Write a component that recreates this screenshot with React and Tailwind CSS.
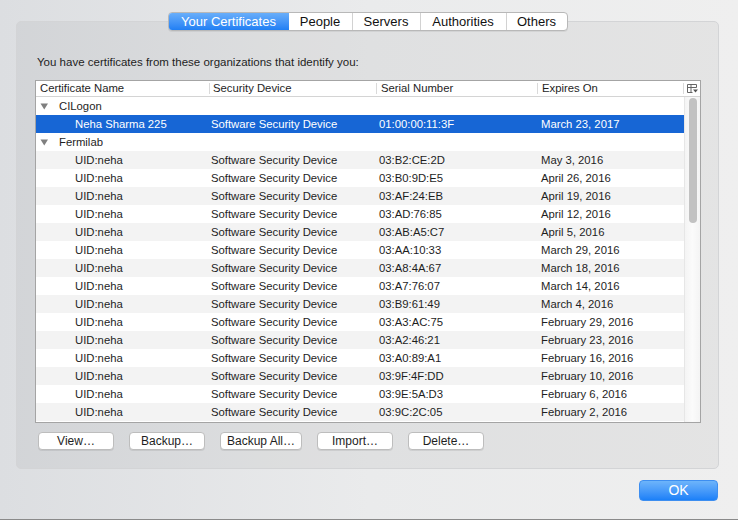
import React from "react";

const rows = [
  ["May 3, 2016", "03:B2:CE:2D"],
  ["April 26, 2016", "03:B0:9D:E5"],
  ["April 19, 2016", "03:AF:24:EB"],
  ["April 12, 2016", "03:AD:76:85"],
  ["April 5, 2016", "03:AB:A5:C7"],
  ["March 29, 2016", "03:AA:10:33"],
  ["March 18, 2016", "03:A8:4A:67"],
  ["March 14, 2016", "03:A7:76:07"],
  ["March 4, 2016", "03:B9:61:49"],
  ["February 29, 2016", "03:A3:AC:75"],
  ["February 23, 2016", "03:A2:46:21"],
  ["February 16, 2016", "03:A0:89:A1"],
  ["February 10, 2016", "03:9F:4F:DD"],
  ["February 6, 2016", "03:9E:5A:D3"],
  ["February 2, 2016", "03:9C:2C:05"],
];

const tabs = [
  ["Your Certificates", "w-[120px]"],
  ["People", "w-[63px]"],
  ["Servers", "w-[68px]"],
  ["Authorities", "w-[86px]"],
  ["Others", "w-[61px]"],
];

function Tri() {
  return (
    <svg width="9" height="7" viewBox="0 0 9 7" className="shrink-0">
      <path d="M0.5 0.5 L8 0.5 L4.25 6.5 Z" fill="#7f7f7f" />
    </svg>
  );
}

function Row({ idx, selected, group, name, device, serial, exp }) {
  const bg = selected ? "bg-[#1766d5] text-white" : idx % 2 === 1 ? "bg-[#f3f3f3] text-[#1e1e1e]" : "bg-white text-[#1e1e1e]";
  if (group) {
    return (
      <div className={`h-[18px] flex items-center ${bg}`}>
        <div className="w-[174px] flex items-center pl-[4px] gap-[10px]">
          <Tri />
          <span>{name}</span>
        </div>
      </div>
    );
  }
  return (
    <div className={`h-[18px] flex items-center ${bg}`}>
      <div className="w-[174px] pl-[39px] whitespace-nowrap">{name}</div>
      <div className="w-[167px] pl-[1px] whitespace-nowrap">{device}</div>
      <div className="w-[161px] pl-[2px] whitespace-nowrap">{serial}</div>
      <div className="w-[145px] pl-[3px] whitespace-nowrap">{exp}</div>
    </div>
  );
}

function Btn({ label, w }) {
  return (
    <div className={`${w} h-[18px] rounded-[4px] bg-white border border-[#bdbdbd] shadow-[0_1px_0_rgba(0,0,0,0.08)] flex items-center justify-center text-[12px] text-[#1e1e1e]`}>
      {label}
    </div>
  );
}

export default function App() {
  return (
    <div className="w-[738px] h-[520px] flex flex-col bg-gradient-to-r from-[#dcdee1] via-[#eaebec] to-[#efefef] font-['Liberation_Sans',Arial,sans-serif] overflow-hidden">
      <div className="ml-[16px] mt-[21px] w-[703px] h-[448px] rounded-[5px] border border-[#d3d4d6] bg-black/[0.045] flex flex-col">
        {/* tabs */}
        <div className="-mt-[10px] flex justify-center">
          <div className="flex h-[19px] rounded-[4px] border border-[#b8b8b8] bg-white shadow-[0_1px_0_rgba(0,0,0,0.06)] overflow-hidden text-[13px]">
            {tabs.map(([t, w], i) => (
              <div
                key={t}
                className={`${w} flex items-center justify-center ${
                  i === 0
                    ? "bg-gradient-to-b from-[#68aefa] to-[#1f7ff4] text-white"
                    : "text-[#111] border-l border-[#d2d2d2]"
                } ${i === 1 ? "border-l-0" : ""}`}
              >
                {t}
              </div>
            ))}
          </div>
        </div>
        <div className="mt-[24px] ml-[20px] h-[14px] text-[11.5px] leading-[14px] text-[#1e1e1e]">
          You have certificates from these organizations that identify you:
        </div>
        {/* table */}
        <div className="mt-[11px] ml-[18px] w-[666px] h-[343px] border border-[#a4a4a4] bg-white flex flex-col text-[11.3px]">
          <div className="h-[16px] flex items-center border-b border-[#d4d4d4] text-[#1e1e1e] bg-white">
            <div className="w-[174px] pl-[4px] border-r border-[#dadada] h-[11px] flex items-center">Certificate Name</div>
            <div className="w-[167px] pl-[3px] border-r border-[#dadada] h-[11px] flex items-center">Security Device</div>
            <div className="w-[161px] pl-[4px] border-r border-[#dadada] h-[11px] flex items-center">Serial Number</div>
            <div className="w-[146px] pl-[4px] border-r border-[#dadada] h-[11px] flex items-center">Expires On</div>
            <div className="flex-1 flex items-center justify-center">
              <svg width="11" height="9" viewBox="0 0 11 9">
                <path d="M0.5 0.5 H9.5 V3.5 M0.5 0.5 V8.5 H5.5 M0.5 3.5 H9.5 M4 0.5 V8" fill="none" stroke="#666" strokeWidth="1" />
                <path d="M6 5.5 H11 L8.5 8.5 Z" fill="#555" />
              </svg>
            </div>
          </div>
          <div className="flex flex-1 min-h-0">
            <div className="w-[648px] flex flex-col">
              <Row idx={0} group name="CILogon" />
              <Row idx={1} selected name="Neha Sharma 225" device="Software Security Device" serial="01:00:00:11:3F" exp="March 23, 2017" />
              <Row idx={2} group name="Fermilab" />
              {rows.map(([exp, serial], i) => (
                <Row key={serial} idx={i + 3} name="UID:neha" device="Software Security Device" serial={serial} exp={exp} />
              ))}
            </div>
            <div className="flex-1 border-l border-[#e6e6e6] bg-gradient-to-r from-[#f4f4f4] via-[#fbfbfb] to-[#f4f4f4] flex justify-center pt-[1px]">
              <div className="w-[8px] h-[125px] rounded-full bg-[#c2c2c2]" />
            </div>
          </div>
        </div>
        {/* buttons */}
        <div className="mt-[9px] ml-[21px] flex gap-[15px]">
          <Btn label="View…" w="w-[76px]" />
          <Btn label="Backup…" w="w-[76px]" />
          <Btn label="Backup All…" w="w-[82px]" />
          <Btn label="Import…" w="w-[76px]" />
          <Btn label="Delete…" w="w-[76px]" />
        </div>
      </div>
      <div className="mt-[11px] ml-[639px] w-[79px] h-[21px] rounded-[4px] bg-gradient-to-b from-[#6db4fa] to-[#1a80f8] border border-[#3d8ef0] text-white text-[14px] flex items-center justify-center">
        OK
      </div>
      <div className="flex-1" />
      <div className="h-[1px] bg-[#8a8a8a]" />
    </div>
  );
}
